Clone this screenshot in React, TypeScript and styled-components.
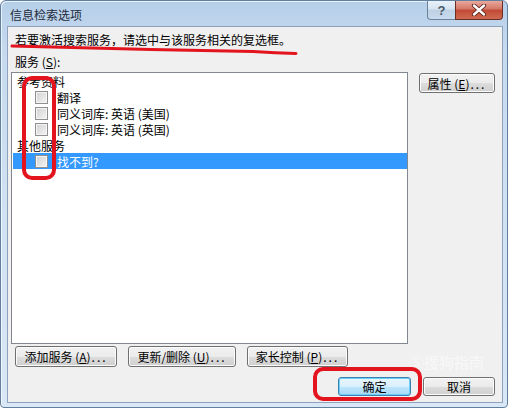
import React from 'react';
import styled, { createGlobalStyle } from 'styled-components';

const GlobalStyle = createGlobalStyle`
  html, body {
    margin: 0;
    padding: 0;
    background: #ffffff;
  }
  body {
    width: 508px;
    height: 412px;
    overflow: hidden;
    font-family: "Noto Sans CJK SC", "Liberation Sans", sans-serif;
    font-size: 12px;
    color: #000;
  }
`;

const Window = styled.div`
  position: relative;
  box-sizing: border-box;
  width: 508px;
  height: 408px;
  border: 1px solid #617f9e;
  border-radius: 6px 6px 4px 4px;
  background: linear-gradient(180deg, #b6cfe9 0%, #c6daef 12%, #d2e3f4 60%, #d9e7f6 100%);
  box-shadow: inset 1px 1px 0 rgba(255, 255, 255, 0.7);
  display: flex;
  flex-direction: column;
  padding: 0 4px 4px 6px;
`;

const TitleBar = styled.div`
  height: 25px;
  display: flex;
  align-items: flex-start;
`;

const Title = styled.div`
  margin: 7px 0 0 3px;
  line-height: 14px;
  font-size: 12px;
  color: #1e2b3a;
`;

const Controls = styled.div`
  margin-left: auto;
  display: flex;
`;

const HelpButton = styled.div`
  box-sizing: border-box;
  width: 28px;
  height: 19px;
  border: 1px solid #6d839b;
  border-right: none;
  border-top: none;
  border-radius: 0 0 0 4px;
  background: linear-gradient(180deg, #e9f1fa 0%, #d6e4f2 45%, #bdd0e4 50%, #c9dbee 100%);
  display: flex;
  align-items: center;
  justify-content: center;
  font-family: "Liberation Sans", sans-serif;
  font-weight: bold;
  font-size: 13px;
  color: #4a5766;
`;

const CloseButton = styled.div`
  box-sizing: border-box;
  width: 48px;
  height: 19px;
  border: 1px solid #6b2d24;
  border-top: none;
  border-radius: 0 0 4px 0;
  background: linear-gradient(180deg, #e8a99d 0%, #d47766 45%, #c24a35 50%, #cf6a50 100%);
  display: flex;
  align-items: center;
  justify-content: center;
`;

const Client = styled.div`
  flex: 1;
  border: 1px solid #8ea3bb;
  background: #f0f0f0;
  display: flex;
  flex-direction: column;
  padding: 0 7px 0 3px;
`;

const Instruction = styled.div`
  margin: 6px 0 0 4px;
  line-height: 14px;
  white-space: nowrap;
`;

const Label = styled.div`
  margin: 8px 0 0 4px;
  line-height: 14px;
`;

const MainRow = styled.div`
  margin-top: 3px;
  display: flex;
  align-items: flex-start;
`;

const ListBox = styled.div`
  box-sizing: border-box;
  width: 397px;
  height: 272px;
  border: 1px solid #828790;
  background: #ffffff;
  padding: 0 0 0 1px;
`;

const Row = styled.div<{ $indent: number; $selected?: boolean }>`
  height: 16px;
  display: flex;
  align-items: center;
  padding-left: ${p => p.$indent}px;
  background: ${p => (p.$selected ? '#3399ff' : 'transparent')};
  color: ${p => (p.$selected ? '#ffffff' : '#000000')};
  white-space: nowrap;
`;

const CheckBox = styled.span`
  box-sizing: border-box;
  width: 13px;
  height: 13px;
  border: 1px solid #8e8f8f;
  background: linear-gradient(135deg, #d2d2d2 0%, #e6e6e6 60%, #f6f6f6 100%);
  box-shadow: inset 0 0 0 1px #f4f4f4;
  margin-right: 9px;
  flex: none;
`;

const Button = styled.div<{ $w: number; $default?: boolean }>`
  box-sizing: border-box;
  width: ${p => p.$w}px;
  height: 21px;
  border: 1px solid ${p => (p.$default ? '#3c7fb1' : '#707070')};
  border-radius: 3px;
  background: ${p =>
    p.$default
      ? 'linear-gradient(180deg, #eaf6fd 0%, #d9f0fc 50%, #bee6fd 51%, #a7d9f5 100%)'
      : 'linear-gradient(180deg, #f2f2f2 0%, #ebebeb 50%, #dddddd 51%, #cfcfcf 100%)'};
  box-shadow: ${p => (p.$default ? 'inset 0 0 0 1px #6ccff5' : 'inset 0 0 0 1px #fcfcfc')};
  display: flex;
  align-items: center;
  justify-content: center;
  white-space: nowrap;
  flex: none;
`;

const SideButton = styled(Button)`
  margin: 1px 0 0 11px;
  height: 20px;
`;

const ActionRow = styled.div`
  margin: 2px 0 0 4px;
  display: flex;
  gap: 11px;
`;

const DialogRow = styled.div`
  margin-top: 10px;
  display: flex;
  justify-content: flex-end;
  gap: 12px;
`;

const DialogButton = styled(Button)`
  height: 19px;
`;

const Ellipsis = styled.span`
  letter-spacing: 2px;
  margin-left: 1px;
`;

const Mark = styled.div<{ $l: number; $t: number; $w: number; $h: number }>`
  position: absolute;
  left: ${p => p.$l}px;
  top: ${p => p.$t}px;
  width: ${p => p.$w}px;
  height: ${p => p.$h}px;
  box-sizing: border-box;
  border: 4px solid #e3141e;
  border-radius: 10px;
  pointer-events: none;
`;

const Underline = styled.svg`
  position: absolute;
  left: 0;
  top: 0;
  pointer-events: none;
`;

const Watermark = styled.div`
  position: absolute;
  left: 408px;
  top: 350px;
  font-size: 15px;
  color: rgba(255, 255, 255, 0.6);
  white-space: nowrap;
  pointer-events: none;
`;

const items = [
  { kind: 'cat', text: '参考资料' },
  { kind: 'item', text: '翻译' },
  { kind: 'item', text: '同义词库: 英语 (美国)' },
  { kind: 'item', text: '同义词库: 英语 (英国)' },
  { kind: 'cat', text: '其他服务' },
  { kind: 'item', text: '找不到?', selected: true },
];

const App: React.FC = () => {
  return (
    <>
      <GlobalStyle />
      <Window>
        <TitleBar>
          <Title>信息检索选项</Title>
          <Controls>
            <HelpButton>?</HelpButton>
            <CloseButton>
              <svg width="16" height="12" viewBox="0 0 16 12">
                <path d="M3 1.5 L13 10.5 M13 1.5 L3 10.5" stroke="#5a2119" strokeWidth="4.2" strokeLinecap="round" />
                <path d="M3 1.5 L13 10.5 M13 1.5 L3 10.5" stroke="#ffffff" strokeWidth="2.4" strokeLinecap="round" />
              </svg>
            </CloseButton>
          </Controls>
        </TitleBar>
        <Client>
          <Instruction>若要激活搜索服务，请选中与该服务相关的复选框。</Instruction>
          <Label>
            服务 (<u>S</u>):
          </Label>
          <MainRow>
            <ListBox>
              {items.map((it, i) =>
                it.kind === 'cat' ? (
                  <Row key={i} $indent={4}>
                    {it.text}
                  </Row>
                ) : (
                  <Row key={i} $indent={22} $selected={it.selected}>
                    <CheckBox />
                    {it.text}
                  </Row>
                )
              )}
            </ListBox>
            <SideButton $w={76}>
              属性 (<u>E</u>)<Ellipsis>...</Ellipsis>
            </SideButton>
          </MainRow>
          <ActionRow>
            <Button $w={102}>
              添加服务 (<u>A</u>)<Ellipsis>...</Ellipsis>
            </Button>
            <Button $w={108}>
              更新/删除 (<u>U</u>)<Ellipsis>...</Ellipsis>
            </Button>
            <Button $w={101}>
              家长控制 (<u>P</u>)<Ellipsis>...</Ellipsis>
            </Button>
          </ActionRow>
          <DialogRow>
            <DialogButton $w={73} $default>
              确定
            </DialogButton>
            <DialogButton $w={72}>取消</DialogButton>
          </DialogRow>
        </Client>

        <Watermark>Ⓢ搜狗指南</Watermark>
        <Underline width="506" height="405">
          <path
            d="M11 45 Q80 47 150 48.5 T252 50.5 Q275 52 295 52.5"
            fill="none"
            stroke="#e3141e"
            strokeWidth="3"
            strokeLinecap="round"
          />
        </Underline>
        <Mark $l={21} $t={75} $w={34} $h={104} />
        <Mark $l={312} $t={366} $w={109} $h={34} />
      </Window>
    </>
  );
};

export default App;
